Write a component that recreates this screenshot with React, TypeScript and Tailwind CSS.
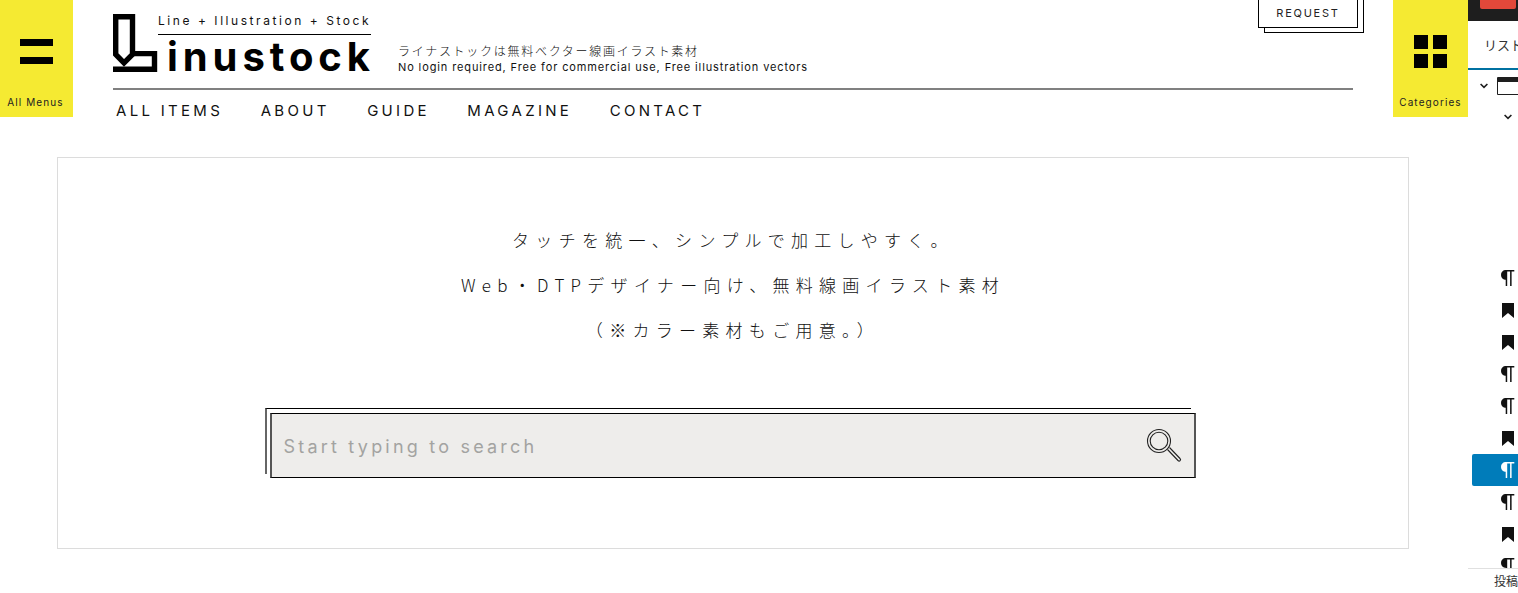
const latin = 'font-["Inter","Liberation_Sans",sans-serif]';

const navItems = ['ALL ITEMS', 'ABOUT', 'GUIDE', 'MAGAZINE', 'CONTACT'];

const sidebarRows: { icon: 'para' | 'mark'; active?: boolean }[] = [
  { icon: 'para' },
  { icon: 'mark' },
  { icon: 'mark' },
  { icon: 'para' },
  { icon: 'para' },
  { icon: 'mark' },
  { icon: 'para', active: true },
  { icon: 'para' },
  { icon: 'mark' },
  { icon: 'para' },
];

const LogoMark = () => (
  <svg width="45" height="58" viewBox="0 0 45 58" className="shrink-0">
    <g fill="none" stroke="#000" strokeWidth="5.4">
      <path d="M2.7 2.7H19.5V40.5L11 49L2.7 40.5Z" />
      <path d="M19.5 39.6H41.5V55.2H0" />
    </g>
  </svg>
);

const SearchIcon = () => (
  <svg width="38" height="38" viewBox="0 0 38 38" fill="none" stroke="#222" strokeWidth="1.1">
    <circle cx="14" cy="14" r="11.5" />
    <circle cx="14" cy="14" r="8.8" />
    <path d="M22.5 22.5L33 33.5C34.5 35 36.5 33 35 31.5L24.5 20.5" />
  </svg>
);

const Chevron = () => (
  <svg width="8" height="6" viewBox="0 0 8 6" fill="none" stroke="#1e1e1e" strokeWidth="1.6" className="shrink-0">
    <path d="M0.6 1L4 4.4L7.4 1" />
  </svg>
);

const SidebarIcon = ({ icon, active }: { icon: 'para' | 'mark'; active?: boolean }) => (
  <div
    className={`h-[32px] ml-[4px] flex items-center justify-end rounded-l-[2px] ${
      active ? 'bg-[#007cba] text-white' : 'text-[#111]'
    }`}
  >
    {icon === 'para' ? (
      <svg width="24" height="24" viewBox="0 0 24 24" fill="currentColor" className="shrink-0 -mr-[2px]">
        <path d="M18.3 4H9.9v-.1l-.9.2c-2.3.4-4 2.4-4 4.8s1.7 4.4 4 4.8l.7.1V20h1.5V5.5h2.9V20h1.5V5.5h2.7V4z" />
      </svg>
    ) : (
      <svg width="12" height="15" viewBox="0 0 12 15" fill="currentColor" className="mr-[4px]">
        <path d="M0 0H12V15L6 10L0 15Z" />
      </svg>
    )}
  </div>
);

export default function App() {
  return (
    <div className="w-[1518px] h-[593px] overflow-hidden flex bg-white text-black">
      <div className="w-[1468px] shrink-0">
        <header className="flex items-start h-[157px]">
          <button className="w-[73px] h-[117px] bg-[#f5ea32] flex flex-col items-center shrink-0">
            <span className="mt-[39px] w-[33px] h-[7px] bg-black" />
            <span className="mt-[11px] w-[33px] h-[7px] bg-black" />
            <span className={`mt-[32px] pr-[2px] text-[10px] leading-[12px] tracking-[0.11em] text-[#222] ${latin}`}>
              All Menus
            </span>
          </button>

          <div className="w-[1320px] px-[40px] relative">
            <div className="h-[88px] flex items-start">
              <div className="pt-[14px] flex items-start">
                <LogoMark />
                <div className="w-[213px]">
                  <p className={`h-[20px] text-[12px] leading-[14px] tracking-[0.213em] whitespace-nowrap text-[#111] ${latin}`}>
                    Line + Illustration + Stock
                  </p>
                  <p
                    className={`border-t border-black h-[38px] pl-[9px] pt-[3px] text-[40px] leading-[38px] font-bold tracking-[0.123em] whitespace-nowrap ${latin}`}
                  >
                    inustock
                  </p>
                </div>
              </div>
              <div className="ml-[27px] pt-[42px] text-[#111]">
                <p className="font-['Noto_Sans_CJK_JP',sans-serif] font-light text-[12px] leading-[17px] tracking-[0.143em]">
                  ライナストックは無料ベクター線画イラスト素材
                </p>
                <p className={`text-[11px] leading-[16px] tracking-[0.08em] ${latin}`}>
                  No login required, Free for commercial use, Free illustration vectors
                </p>
              </div>
            </div>
            <div className="h-[2px] bg-[#808080]" />
            <nav className={`flex gap-[37.5px] pl-[3px] pt-[13px] text-[15px] leading-[16px] tracking-[0.22em] text-[#111] ${latin}`}>
              {navItems.map((item) => (
                <a key={item}>{item}</a>
              ))}
            </nav>

            {/* the button is cut off by the top of the page */}
            <div className="absolute top-[-8px] left-[1185px] w-[100px] h-[36px] border border-black bg-white flex items-center justify-center pt-[7px] text-[11px] tracking-[0.16em] text-[#222] shadow-[6px_5px_0_-1px_#fff,6px_5px_0_0_#000]">
              <span className={latin}>REQUEST</span>
            </div>
          </div>

          <button className="w-[75px] h-[117px] bg-[#f5ea32] flex flex-col items-center shrink-0">
            <span className="mt-[35px] grid grid-cols-2 gap-[5px]">
              <span className="w-[14px] h-[14px] bg-black" />
              <span className="w-[14px] h-[14px] bg-black" />
              <span className="w-[14px] h-[14px] bg-black" />
              <span className="w-[14px] h-[14px] bg-black" />
            </span>
            <span className={`mt-[28px] text-[10px] leading-[12px] tracking-[0.11em] text-[#222] ${latin}`}>
              Categories
            </span>
          </button>
        </header>

        <section className="ml-[57px] w-[1352px] h-[392px] border border-[#dcdcdc] flex flex-col items-center">
          <div className="pt-[59px] font-['Noto_Sans_CJK_JP',sans-serif] font-light text-[17px] leading-[45px] tracking-[0.37em] text-center text-[#111]">
            <p>タッチを統一、シンプルで加工しやすく。</p>
            <p>Web・DTPデザイナー向け、無料線画イラスト素材</p>
            <p>（※カラー素材もご用意。）</p>
          </div>
          <div className="mt-[56px] ml-[-11px] border-t border-l-2 border-t-black border-l-[#666] w-[926px] h-[66px] relative">
            <div className="absolute left-[3px] top-[4px] w-[926px] h-[65px] border-y border-x-2 border-y-black border-x-[#555] bg-[#eeedeb] flex items-center justify-between pl-[12px] pr-[11px]">
              <span className="pt-[1px] font-['Inter',sans-serif] text-[18px] tracking-[0.178em] text-[#a3a3a1]">
                Start typing to search
              </span>
              <SearchIcon />
            </div>
          </div>
        </section>
      </div>

      <aside className="w-[50px] shrink-0 overflow-hidden flex flex-col font-['Noto_Sans_CJK_JP',sans-serif]">
        <div className="h-[21px] bg-[#1e1e1e] shrink-0 pl-[12px]">
          <div className="w-[36px] h-[9px] bg-[#e2483a] rounded-b-[2px]" />
        </div>
        <div className="h-[49px] shrink-0 border-b-2 border-[#0071a1] pl-[16px] flex items-center text-[13px] whitespace-nowrap text-[#333]">
          リスト
        </div>
        <div className="h-[32px] shrink-0 flex items-center pl-[12px] gap-[9px]">
          <Chevron />
          <span className="w-[24px] h-[18px] border border-[#1e1e1e] border-t-[5px] rounded-[1px] shrink-0" />
        </div>
        <div className="h-[24px] shrink-0 pl-[36px] pt-[12px]">
          <Chevron />
        </div>
        <div className="mt-[136px] flex-1 overflow-hidden">
          {sidebarRows.map((row, i) => (
            <SidebarIcon key={i} icon={row.icon} active={row.active} />
          ))}
        </div>
        <div className="h-[25px] shrink-0 bg-white border-t border-[#e0e0e0] pl-[26px] text-[12px] leading-[24px] whitespace-nowrap text-[#333]">
          投稿
        </div>
      </aside>
    </div>
  );
}
